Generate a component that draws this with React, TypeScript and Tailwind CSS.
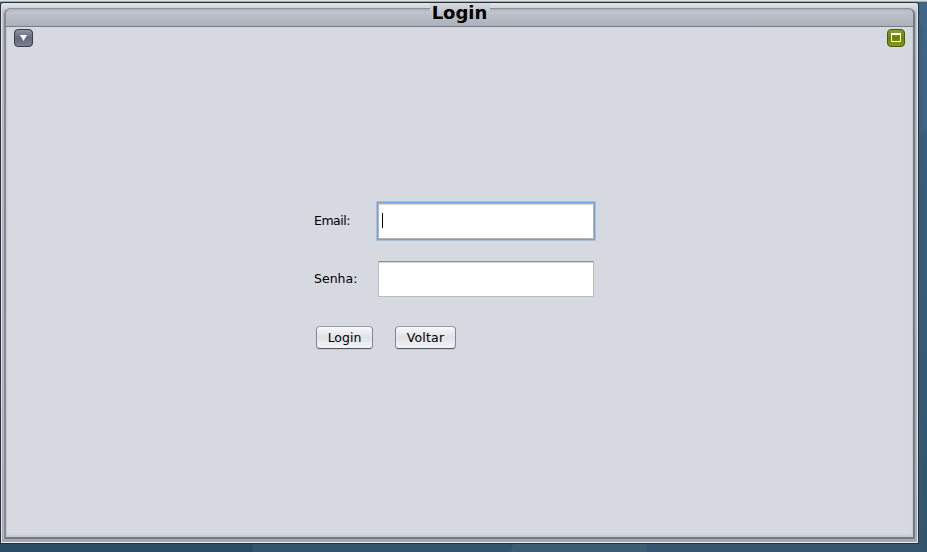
import type { ReactNode } from "react";

function Field({ label, focused = false }: { label: string; focused?: boolean }) {
  return (
    <label className="flex h-[36px] items-center">
      <span
        className={
          "w-[64px] text-[12.5px] leading-4 " + (focused ? "tracking-[-0.5px]" : "")
        }
      >
        {label}
      </span>
      <span
        className={
          "flex h-[36px] w-[216px] items-center border bg-white pl-[3px] " +
          (focused
            ? "border-[#b8b3ae] shadow-[0_0_0_1px_#74a4d3,0_0_0_2px_#a5c1df,inset_0_1px_0_#d8d5d2]"
            : "border-[#babbbe] border-t-[#8e8f93] shadow-[inset_0_1px_0_#d8d9dc]")
        }
      >
        {focused && <span className="-mt-px h-[15px] w-px bg-black" />}
      </span>
    </label>
  );
}

function Button({ className, children }: { className: string; children: ReactNode }) {
  return (
    <button
      type="button"
      className={
        "flex h-[23px] items-center justify-center rounded-[4px] border border-[#83868d] border-t-[#999ca3] border-b-[#555960] bg-linear-to-b from-[#f7f8fa] via-[#dfe2e7] to-[#f3f5f9] text-[12.5px] leading-4 shadow-[0_1px_0_#c5c9d1] " +
        className
      }
    >
      {children}
    </button>
  );
}

export default function App() {
  return (
    <div className="relative h-[552px] w-[927px] overflow-hidden bg-linear-to-b from-[#3f658a] via-[#3b6080] to-[#34556d] font-['DejaVu_Sans',sans-serif] text-black">
      <svg className="absolute inset-0" width="927" height="552" aria-hidden="true">
        <path d="M0 543h253v9H0z" fill="#2b4c65" />
        <path d="M253 543h260l-2 9H253z" fill="#32546c" />
        <path d="M513 543h134v9H511z" fill="#3c5d73" />
        <path d="M919 24q4 2 4 8v520h-4z" fill="#3e5c77" fillOpacity=".55" />
        <path d="M919 137l8-8v423h-8z" fill="#2c5069" fillOpacity=".25" />
        <path d="M0 0h927v1H0z" fill="#dce0e1" />
        <path d="M0 1h927v1H0z" fill="#a2adb3" />
      </svg>
      <div className="relative mt-[2px] h-[542px] w-[919px] rounded-t-[3px] border border-[#25323b] bg-linear-to-b from-[#e5e7e9] via-[#c0c4cc] via-[9px] to-[#a5aab5] p-[3px] pt-[5px] shadow-[inset_1px_0_0_#e3e5e8,inset_-1px_0_0_#e3e5e8,inset_0_-1px_0_#edeeed]">
        <main className="flex h-[531px] flex-col rounded-t-[7px] border-2 border-t border-[#858993] border-t-[#8c8f98] border-r-[#747b87] border-b-[#747b87] bg-[#d6d9e0] shadow-[-1px_0_0_#b4b7bf,1px_0_0_#acb1bb,inset_0_-2px_2px_#c7cad0,inset_1px_0_1px_#c7cad0,inset_-1px_0_1px_#c7cad0]">
          <header className="flex h-[18px] shrink-0 justify-center rounded-t-[5px] border-b border-[#747b87] bg-linear-to-b from-[#aeb1ba] via-[#c0c3cb] via-[3px] to-[#abb0bb]">
            <h1 className="-mt-[6px] h-[23px] w-[60px] bg-linear-to-b from-[#d6d8dd] via-[#c1c4cd] via-40% to-[#abb0bb] text-center text-[18px] leading-[20px] font-bold">
              Login
            </h1>
          </header>
          <div className="flex justify-between pt-[2px] pr-[8px] pl-[8px]">
            <button type="button" aria-label="Menu" className="h-[18px] w-[19px]">
              <svg width="19" height="18" viewBox="0 0 19 18">
                <defs>
                  <linearGradient id="menu" x2="0" y2="1">
                    <stop stopColor="#9298a3" />
                    <stop offset=".5" stopColor="#626b7b" />
                    <stop offset="1" stopColor="#788292" />
                  </linearGradient>
                </defs>
                <rect x=".5" y=".5" width="18" height="17" rx="3.5" fill="url(#menu)" stroke="#373e4b" />
                <path d="M6 6h7L9.5 12z" fill="#fff" />
              </svg>
            </button>
            <button type="button" aria-label="Maximize" className="h-[18px] w-[18px]">
              <svg width="18" height="18" viewBox="0 0 18 18">
                <defs>
                  <linearGradient id="maximize" x2="0" y2="1">
                    <stop stopColor="#8b9e40" />
                    <stop offset=".5" stopColor="#708000" />
                    <stop offset="1" stopColor="#879e18" />
                  </linearGradient>
                </defs>
                <rect x=".5" y=".5" width="17" height="17" rx="3.5" fill="url(#maximize)" stroke="#4a5d0a" />
                <path d="M4.5 4.5h9v8h-9z" fill="none" stroke="#fff" />
                <path d="M4 4h10v2H4z" fill="#fff" />
              </svg>
            </button>
          </div>
          <form className="mt-[156px] ml-[308px] flex w-[282px] flex-col">
            <Field label="Email:" focused />
            <div className="mt-[22px]">
              <Field label="Senha:" />
            </div>
            <div className="mt-[29px] ml-[2px] flex gap-[22px]">
              <Button className="w-[57px]">Login</Button>
              <Button className="w-[61px] tracking-[0.2px]">Voltar</Button>
            </div>
          </form>
        </main>
      </div>
    </div>
  );
}
